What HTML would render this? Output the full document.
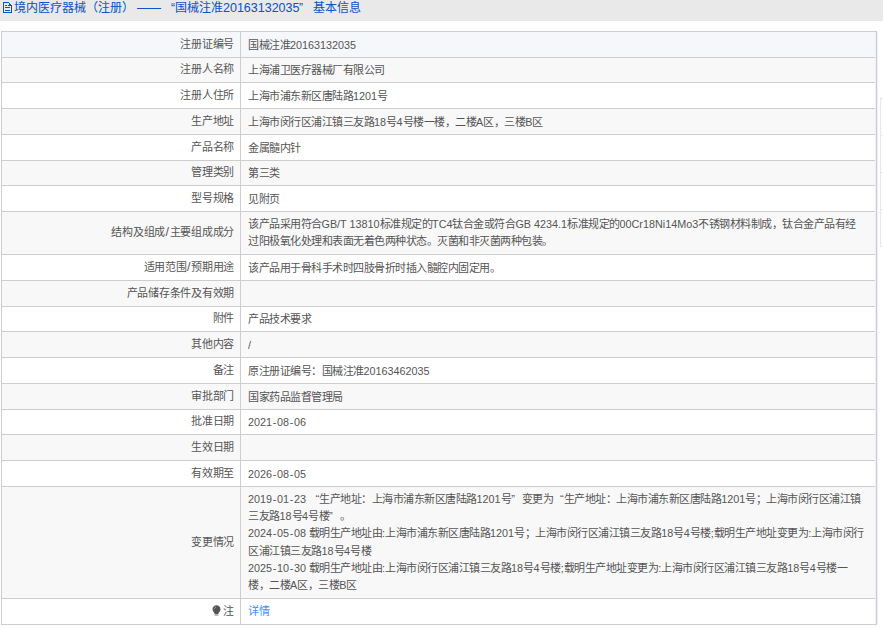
<!DOCTYPE html>
<html lang="zh-CN"><head><meta charset="utf-8"><style>
html,body{margin:0;padding:0;background:#fff;width:883px;height:629px;overflow:hidden;position:relative}
body{font-family:"Liberation Sans",sans-serif;}
.hdr{position:absolute;left:0;top:0;width:883px;height:21px;background:#e9e9e9;}
.hdr .t{position:absolute;top:1px;-webkit-text-stroke:0.05px #0d55c6;font-size:12px;line-height:15px;color:#0d55c6;white-space:nowrap}
.hdr .hd{font-size:12.5px}
.hdr svg{position:absolute;left:0px;top:0px}
.bg{position:absolute;left:1px;width:875px}
.hl{position:absolute;left:1px;width:874px;height:1px;background:#cdcdcd}
.vl{position:absolute;top:31px;height:594px;width:1px;background:#cdcdcd}
.lab{position:absolute;left:2px;width:232px;display:flex;align-items:center;justify-content:flex-end;font-size:11px;letter-spacing:-0.25px;line-height:17.25px;color:#555;-webkit-text-stroke:0px #555;white-space:nowrap}
.val{position:absolute;left:248px;width:626px;display:flex;align-items:center;font-size:11px;letter-spacing:-0.5px;line-height:17.25px;color:#555;-webkit-text-stroke:0px #555;white-space:nowrap;overflow:hidden}
.la{font-size:10.8px;letter-spacing:0}
.hy{padding:0 0.7px}
.sl2{padding:0 0.5px;font-size:12.5px}
.lk{color:#3a8ffb;-webkit-text-stroke:0;letter-spacing:0;position:relative;top:-0.5px}
.ql{display:inline-block;width:10.5px;text-align:right;letter-spacing:0}
.qr{display:inline-block;width:10.5px;text-align:left;letter-spacing:0}
.bulb{margin-right:2.5px;position:relative;top:1.5px}
.side{position:absolute;left:880px;top:98px;width:10px;height:149px;border-left:1px solid #e4e8f0;border-top:1px solid #e4e8f0;box-sizing:border-box;background:#fdfdff}
.sl{position:absolute;left:880px;width:10px;height:1px;background:#e8ebf2}
</style></head><body>
<div class="hdr"><svg width="16" height="16" viewBox="0 0 16 16" shape-rendering="crispEdges"><g fill="#0d55c6"><rect x="3" y="2" width="1" height="11"/><rect x="3" y="12" width="9" height="1"/><rect x="11" y="5" width="1" height="8"/><rect x="3" y="2" width="6" height="1"/><rect x="9" y="3" width="1" height="2"/><rect x="10" y="4" width="1" height="1"/><rect x="8" y="5" width="3" height="1"/><rect x="5" y="5" width="2" height="1"/><rect x="5" y="7" width="5" height="1"/><rect x="5" y="10" width="5" height="1"/></g><path d="M8.5 2.5L11.5 5.5" stroke="#0d55c6" stroke-width="1" shape-rendering="auto"/></svg>
<div class="t" style="left:14px">境内医疗器械（注册）</div>
<div class="t" style="left:137px">——</div>
<div class="t" style="left:163px;width:12px;text-align:right">“</div>
<div class="t" style="left:175px">国械注准</div>
<div class="t hd" style="left:223px">20163132035</div>
<div class="t" style="left:299px">”</div>
<div class="t" style="left:313px">基本信息</div>
</div>
<div class="bg" style="top:32px;height:25px;background:#f5f7fb"></div>
<div class="lab" style="top:32px;height:25px"><div style="position:relative;top:0px">注册证编号</div></div>
<div class="val" style="top:32px;height:25px"><div style="position:relative;top:1px">国械注准<span class="la">20163132035</span></div></div>
<div class="bg" style="top:58px;height:24px;background:#f8f8f8"></div>
<div class="lab" style="top:58px;height:24px"><div style="position:relative;top:0px">注册人名称</div></div>
<div class="val" style="top:58px;height:24px"><div style="position:relative;top:1px">上海浦卫医疗器械厂有限公司</div></div>
<div class="bg" style="top:83px;height:25px;background:#ffffff"></div>
<div class="lab" style="top:83px;height:25px"><div style="position:relative;top:0px">注册人住所</div></div>
<div class="val" style="top:83px;height:25px"><div style="position:relative;top:1px">上海市浦东新区唐陆路<span class="la">1201</span>号</div></div>
<div class="bg" style="top:109px;height:25px;background:#f8f8f8"></div>
<div class="lab" style="top:109px;height:25px"><div style="position:relative;top:0px">生产地址</div></div>
<div class="val" style="top:109px;height:25px"><div style="position:relative;top:1px">上海市闵行区浦江镇三友路<span class="la">18</span>号<span class="la">4</span>号楼一楼，二楼<span class="la">A</span>区，三楼<span class="la">B</span>区</div></div>
<div class="bg" style="top:135px;height:25px;background:#ffffff"></div>
<div class="lab" style="top:135px;height:25px"><div style="position:relative;top:0px">产品名称</div></div>
<div class="val" style="top:135px;height:25px"><div style="position:relative;top:1px">金属髓内针</div></div>
<div class="bg" style="top:161px;height:24px;background:#f8f8f8"></div>
<div class="lab" style="top:161px;height:24px"><div style="position:relative;top:0px">管理类别</div></div>
<div class="val" style="top:161px;height:24px"><div style="position:relative;top:1px">第三类</div></div>
<div class="bg" style="top:186px;height:25px;background:#ffffff"></div>
<div class="lab" style="top:186px;height:25px"><div style="position:relative;top:0px">型号规格</div></div>
<div class="val" style="top:186px;height:25px"><div style="position:relative;top:1px">见附页</div></div>
<div class="bg" style="top:212px;height:42px;background:#f8f8f8"></div>
<div class="lab" style="top:212px;height:42px"><div style="position:relative;top:0px">结构及组成<span class="la"><span class="sl2">/</span></span>主要组成成分</div></div>
<div class="val" style="top:212px;height:42px"><div style="position:relative;top:0px">该产品采用符合<span class="la">GB/T 13810</span>标准规定的<span class="la">TC4</span>钛合金或符合<span class="la">GB 4234.1</span>标准规定的<span class="la">00Cr18Ni14Mo3</span>不锈钢材料制成，钛合金产品有经<br>过阳极氧化处理和表面无着色两种状态。灭菌和非灭菌两种包装。</div></div>
<div class="bg" style="top:255px;height:25px;background:#ffffff"></div>
<div class="lab" style="top:255px;height:25px"><div style="position:relative;top:0px">适用范围<span class="la"><span class="sl2">/</span></span>预期用途</div></div>
<div class="val" style="top:255px;height:25px"><div style="position:relative;top:1px">该产品用于骨科手术时四肢骨折时插入髓腔内固定用。</div></div>
<div class="bg" style="top:281px;height:25px;background:#f8f8f8"></div>
<div class="lab" style="top:281px;height:25px"><div style="position:relative;top:0px">产品储存条件及有效期</div></div>
<div class="val" style="top:281px;height:25px"><div style="position:relative;top:1px"></div></div>
<div class="bg" style="top:307px;height:24px;background:#ffffff"></div>
<div class="lab" style="top:307px;height:24px"><div style="position:relative;top:0px">附件</div></div>
<div class="val" style="top:307px;height:24px"><div style="position:relative;top:1px">产品技术要求</div></div>
<div class="bg" style="top:332px;height:25px;background:#f8f8f8"></div>
<div class="lab" style="top:332px;height:25px"><div style="position:relative;top:0px">其他内容</div></div>
<div class="val" style="top:332px;height:25px"><div style="position:relative;top:1px"><span class="la">/</span></div></div>
<div class="bg" style="top:358px;height:25px;background:#ffffff"></div>
<div class="lab" style="top:358px;height:25px"><div style="position:relative;top:0px">备注</div></div>
<div class="val" style="top:358px;height:25px"><div style="position:relative;top:1px">原注册证编号：国械注准<span class="la">20163462035</span></div></div>
<div class="bg" style="top:384px;height:25px;background:#f8f8f8"></div>
<div class="lab" style="top:384px;height:25px"><div style="position:relative;top:0px">审批部门</div></div>
<div class="val" style="top:384px;height:25px"><div style="position:relative;top:1px">国家药品监督管理局</div></div>
<div class="bg" style="top:410px;height:24px;background:#ffffff"></div>
<div class="lab" style="top:410px;height:24px"><div style="position:relative;top:0px">批准日期</div></div>
<div class="val" style="top:410px;height:24px"><div style="position:relative;top:1px"><span class="la">2021<span class="hy">-</span>08<span class="hy">-</span>06</span></div></div>
<div class="bg" style="top:435px;height:25px;background:#f8f8f8"></div>
<div class="lab" style="top:435px;height:25px"><div style="position:relative;top:0px">生效日期</div></div>
<div class="val" style="top:435px;height:25px"><div style="position:relative;top:1px"></div></div>
<div class="bg" style="top:461px;height:25px;background:#ffffff"></div>
<div class="lab" style="top:461px;height:25px"><div style="position:relative;top:0px">有效期至</div></div>
<div class="val" style="top:461px;height:25px"><div style="position:relative;top:1px"><span class="la">2026<span class="hy">-</span>08<span class="hy">-</span>05</span></div></div>
<div class="bg" style="top:487px;height:111px;background:#f8f8f8"></div>
<div class="lab" style="top:487px;height:111px"><div style="position:relative;top:0px">变更情况</div></div>
<div class="val" style="top:487px;height:111px"><div style="position:relative;top:0px"><span class="la">2019<span class="hy">-</span>01<span class="hy">-</span>23</span> <span class="ql">“</span>生产地址：上海市浦东新区唐陆路<span class="la">1201</span>号<span class="qr">”</span>变更为<span class="ql">“</span>生产地址：上海市浦东新区唐陆路<span class="la">1201</span>号；上海市闵行区浦江镇<br>三友路<span class="la">18</span>号<span class="la">4</span>号楼<span class="qr">”</span>。<br><span class="la">2024<span class="hy">-</span>05<span class="hy">-</span>08</span> 载明生产地址由<span class="la">:</span>上海市浦东新区唐陆路<span class="la">1201</span>号；上海市闵行区浦江镇三友路<span class="la">18</span>号<span class="la">4</span>号楼<span class="la">;</span>载明生产地址变更为<span class="la">:</span>上海市闵行<br>区浦江镇三友路<span class="la">18</span>号<span class="la">4</span>号楼<br><span class="la">2025<span class="hy">-</span>10<span class="hy">-</span>30</span> 载明生产地址由<span class="la">:</span>上海市闵行区浦江镇三友路<span class="la">18</span>号<span class="la">4</span>号楼<span class="la">;</span>载明生产地址变更为<span class="la">:</span>上海市闵行区浦江镇三友路<span class="la">18</span>号<span class="la">4</span>号楼一<br>楼，二楼<span class="la">A</span>区，三楼<span class="la">B</span>区</div></div>
<div class="bg" style="top:599px;height:25px;background:#ffffff"></div>
<div class="lab" style="top:599px;height:25px"><div style="position:relative;top:0px"><svg class="bulb" width="9" height="11" viewBox="0 0 9 11"><path d="M4.5 0.3C2.2 0.3 0.5 2 0.5 4.2c0 1.6 1 2.6 1.7 3.5.3.4.4.8.4 1.3h3.8c0-.5.1-.9.4-1.3.7-.9 1.7-1.9 1.7-3.5C8.5 2 6.8 0.3 4.5 0.3z" fill="#555"/><rect x="2.6" y="9.3" width="3.8" height="1.4" fill="#999"/><path d="M2.2 4.2c0-1.1.8-2 1.8-2.2" stroke="#bbb" stroke-width=".8" fill="none"/></svg>注</div></div>
<div class="val" style="top:599px;height:25px"><div style="position:relative;top:1px"><span class="lk">详情</span></div></div>
<div class="hl" style="top:31px;width:876px;z-index:2"></div>
<div class="hl" style="top:57px"></div>
<div class="hl" style="top:82px"></div>
<div class="hl" style="top:108px"></div>
<div class="hl" style="top:134px"></div>
<div class="hl" style="top:160px"></div>
<div class="hl" style="top:185px"></div>
<div class="hl" style="top:211px"></div>
<div class="hl" style="top:254px"></div>
<div class="hl" style="top:280px"></div>
<div class="hl" style="top:306px"></div>
<div class="hl" style="top:331px"></div>
<div class="hl" style="top:357px"></div>
<div class="hl" style="top:383px"></div>
<div class="hl" style="top:409px"></div>
<div class="hl" style="top:434px"></div>
<div class="hl" style="top:460px"></div>
<div class="hl" style="top:486px"></div>
<div class="hl" style="top:598px"></div>
<div class="hl" style="top:624px;width:876px;z-index:2"></div>
<div class="vl" style="left:1px"></div>
<div class="vl" style="left:240px"></div>
<div class="vl" style="left:876px"></div><div class="vl" style="left:875px;top:32px;height:592px;background:#eef0f7"></div><div class="vl" style="left:877px;top:32px;height:592px;background:#eef0f7"></div>
<div class="side"></div><div class="sl" style="top:135px"></div><div class="sl" style="top:172px"></div><div class="sl" style="top:209px"></div><div class="sl" style="top:246px"></div>
</body></html>
